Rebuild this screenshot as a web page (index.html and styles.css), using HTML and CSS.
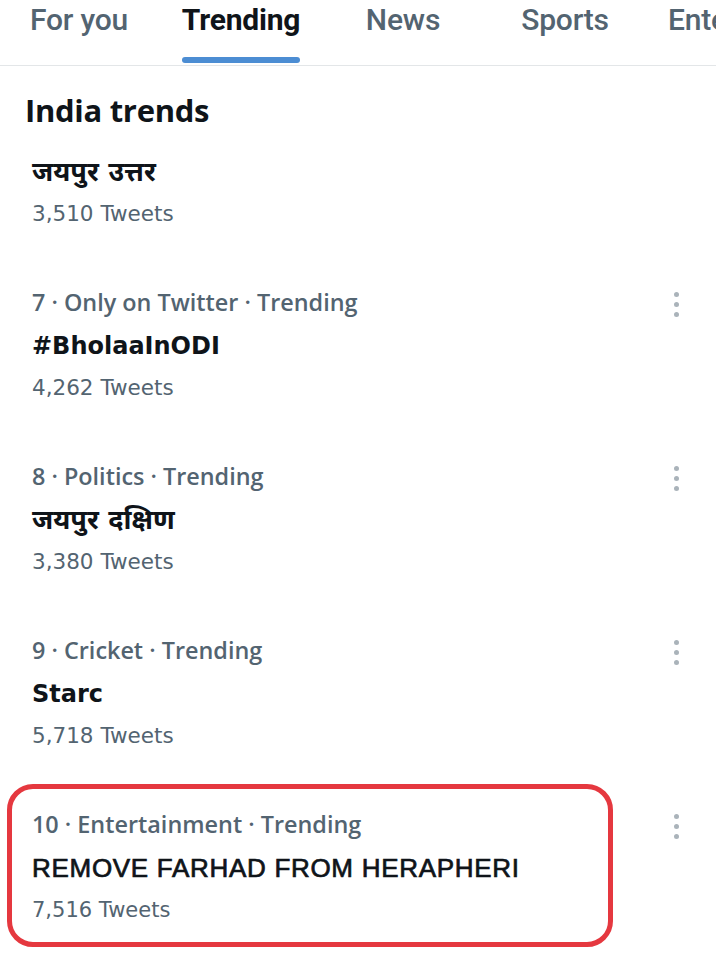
FILE: index.html
```html
<!DOCTYPE html>
<html lang="en">
<head>
<meta charset="utf-8">
<title>Trending</title>
<link rel="stylesheet" href="styles.css">
</head>
<body>
<nav class="tabs">
  <div class="tab"><span class="tab-label">For you</span></div>
  <div class="tab active"><span class="tab-label">Trending</span></div>
  <div class="tab"><span class="tab-label">News</span></div>
  <div class="tab"><span class="tab-label">Sports</span></div>
  <div class="tab"><span class="tab-label">Entertainment</span></div>
</nav>
<main class="feed">
  <h2 class="section-title">India trends</h2>

  <div class="trend first">
    <div class="trend-body">
      <div class="trend-title deva">जयपुर उत्तर</div>
      <div class="trend-count">3,510 Tweets</div>
    </div>
  </div>

  <div class="trend">
    <div class="trend-body">
      <div class="trend-meta">7 · Only on Twitter · Trending</div>
      <div class="trend-title">#BholaaInODI</div>
      <div class="trend-count">4,262 Tweets</div>
    </div>
    <div class="kebab"><i></i><i></i><i></i></div>
  </div>

  <div class="trend">
    <div class="trend-body">
      <div class="trend-meta">8 · Politics · Trending</div>
      <div class="trend-title deva">जयपुर दक्षिण</div>
      <div class="trend-count">3,380 Tweets</div>
    </div>
    <div class="kebab"><i></i><i></i><i></i></div>
  </div>

  <div class="trend">
    <div class="trend-body">
      <div class="trend-meta">9 · Cricket · Trending</div>
      <div class="trend-title">Starc</div>
      <div class="trend-count">5,718 Tweets</div>
    </div>
    <div class="kebab"><i></i><i></i><i></i></div>
  </div>

  <div class="trend highlighted condensed">
    <div class="trend-body">
      <div class="trend-meta">10 · Entertainment · Trending</div>
      <div class="trend-title">REMOVE FARHAD FROM HERAPHERI</div>
      <div class="trend-count">7,516 Tweets</div>
    </div>
    <div class="kebab"><i></i><i></i><i></i></div>
  </div>
</main>
</body>
</html>
```
FILE: styles.css
```css
html, body {
  margin: 0;
  padding: 0;
  background: #ffffff;
}
body {
  width: 716px;
  height: 968px;
  overflow: hidden;
  font-family: "DejaVu Sans", "Noto Sans", sans-serif;
  color: #0f1419;
}

.tabs {
  display: flex;
  height: 65px;
  border-bottom: 1px solid #e3e6e8;
  margin-left: -2px;
  white-space: nowrap;
  overflow: hidden;
}
.tab {
  flex: 0 0 162px;
  display: flex;
  justify-content: center;
  position: relative;
}
.tab:last-child {
  flex: 1 0 auto;
  justify-content: flex-start;
  padding-left: 22px;
}
.tab-label {
  font-family: Roboto, "Liberation Sans", sans-serif;
  font-size: 30px;
  font-weight: 500;
  color: #536471;
  line-height: 40px;
  height: 65px;
  box-sizing: border-box;
  position: relative;
  letter-spacing: -0.2px;
}
.tab.active .tab-label {
  color: #0f1419;
  font-weight: 700;
}
.tab.active .tab-label::after {
  content: "";
  position: absolute;
  left: 0;
  right: 0;
  bottom: 2px;
  height: 6px;
  border-radius: 3px;
  background: #4c8dd3;
}

.section-title {
  margin: 22px 0 18px 25px;
  font-family: "Open Sans", "Liberation Sans", sans-serif;
  font-size: 31px;
  font-weight: 700;
  line-height: 44px;
  letter-spacing: -0.3px;
}

.trend {
  display: flex;
  justify-content: space-between;
  align-items: flex-start;
  padding: 0 0 46px 32px;
  position: relative;
}
.trend-meta {
  font-family: "Open Sans", "DejaVu Sans", sans-serif;
  font-size: 23.4px;
  font-weight: 600;
  color: #536471;
  line-height: 44px;
}
.trend-title {
  font-size: 24px;
  font-weight: 700;
  color: #0f1419;
  line-height: 44px;
}
.trend-title.deva {
  font-size: 27px;
}
.trend-count {
  font-size: 21.5px;
  font-weight: 400;
  color: #536471;
  line-height: 40px;
}

.kebab {
  display: flex;
  flex-direction: column;
  gap: 5px;
  margin: 12px 37px 0 0;
}
.kebab i {
  display: block;
  width: 5px;
  height: 5px;
  border-radius: 50%;
  background: #aab3ba;
}

.condensed .trend-title {
  font-family: "Liberation Sans", Arial, sans-serif;
  font-size: 26px;
  font-weight: 400;
  -webkit-text-stroke: 0.7px #0f1419;
  letter-spacing: 0.7px;
}
.condensed .trend-count {
  font-size: 21px;
}

.highlighted::after {
  content: "";
  position: absolute;
  left: 7px;
  top: -18px;
  width: 606px;
  height: 163px;
  box-sizing: border-box;
  border: 5px solid #e5383f;
  border-radius: 26px;
  pointer-events: none;
}
```
